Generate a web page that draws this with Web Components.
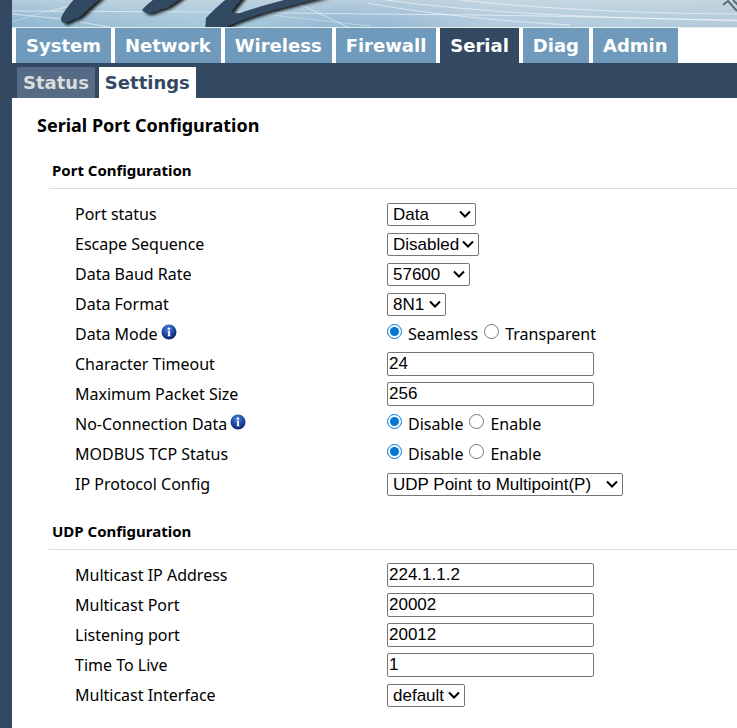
<!DOCTYPE html>
<html lang="en">
<head>
<meta charset="utf-8">
<title>Serial Port Configuration</title>
<style>
    :root {
        --navy: #334962;
        --blue: #6f9abb;
        --muted: #566b85;
        --rule: #dcdcdc;
    }

    body {
        margin: 0;
        min-height: 100vh;
        box-sizing: border-box;
        border-left: 12px solid var(--navy);
        background: #fff;
        color: #000;
        font: 16px/20px "Noto Sans", "Open Sans", sans-serif;
        overflow-x: hidden;
    }

    main {
        padding: 15px 0 0 25px;
    }

    h1 {
        margin: 0 0 23px;
        font-size: 18px;
        line-height: 24px;
    }
</style>
</head>
<body>
<page-banner></page-banner>
<main-tabs>
    <nav-tab>System</nav-tab>
    <nav-tab>Network</nav-tab>
    <nav-tab>Wireless</nav-tab>
    <nav-tab>Firewall</nav-tab>
    <nav-tab class="active">Serial</nav-tab>
    <nav-tab>Diag</nav-tab>
    <nav-tab>Admin</nav-tab>
</main-tabs>
<sub-tabs>
    <nav-tab class="sub">Status</nav-tab>
    <nav-tab class="sub active">Settings</nav-tab>
</sub-tabs>
<main>
    <h1>Serial Port Configuration</h1>
    <config-section heading="Port Configuration">
        <select-field label="Port status" options="Data" width="89"></select-field>
        <select-field label="Escape Sequence" options="Disabled|Enabled" width="92"></select-field>
        <select-field label="Data Baud Rate" options="57600|38400|19200|9600" width="83"></select-field>
        <select-field label="Data Format" options="8N1|8E1|8O1" width="59"></select-field>
        <radio-field label="Data Mode" options="Seamless|Transparent" info></radio-field>
        <text-field label="Character Timeout" value="24"></text-field>
        <text-field label="Maximum Packet Size" value="256"></text-field>
        <radio-field label="No-Connection Data" options="Disable|Enable" info></radio-field>
        <radio-field label="MODBUS TCP Status" options="Disable|Enable"></radio-field>
        <select-field label="IP Protocol Config" options="UDP Point to Multipoint(P)" width="236"></select-field>
    </config-section>
    <config-section heading="UDP Configuration">
        <text-field label="Multicast IP Address" value="224.1.1.2"></text-field>
        <text-field label="Multicast Port" value="20002"></text-field>
        <text-field label="Listening port" value="20012"></text-field>
        <text-field label="Time To Live" value="1"></text-field>
        <select-field label="Multicast Interface" options="default" width="78"></select-field>
    </config-section>
</main>

<script>
class PageBanner extends HTMLElement {
    constructor() {
        super();
        this.attachShadow({ mode: 'open' });
        this.shadowRoot.innerHTML = `
            <style>
                :host {
                    display: block;
                    height: 27px;
                    border-bottom: 1px solid #e4ecea;
                    background: #b4cbdb;
                    overflow: hidden;
                }
                svg {
                    display: block;
                    width: 100%;
                    height: 27px;
                }
            </style>
            <svg viewBox="12 0 725 27" preserveAspectRatio="xMinYMin slice" aria-hidden="true">
                <defs>
                    <linearGradient id="sky">
                        <stop offset="0" stop-color="#8db6d0"/>
                        <stop offset=".12" stop-color="#9cc0d6"/>
                        <stop offset=".28" stop-color="#a9c9dc"/>
                        <stop offset=".45" stop-color="#94b9d3"/>
                        <stop offset=".53" stop-color="#9abbd5"/>
                        <stop offset=".65" stop-color="#b4cadd"/>
                        <stop offset=".85" stop-color="#b5cedd"/>
                        <stop offset="1" stop-color="#b3cad8"/>
                    </linearGradient>
                    <linearGradient id="haze" x2="0" y2="1">
                        <stop offset="0" stop-color="#d5dfe3" stop-opacity=".55"/>
                        <stop offset="1" stop-color="#b7cfdf" stop-opacity="0"/>
                    </linearGradient>
                    <filter id="shade" x="-10%" y="-20%" width="130%" height="160%">
                        <feDropShadow dx="3" dy="2" stdDeviation="1.5" flood-color="#000" flood-opacity=".85"/>
                    </filter>
                </defs>
                <rect x="12" width="725" height="27" fill="url(#sky)"/>
                <rect x="12" width="725" height="27" fill="url(#haze)"/>
                <g fill="none" stroke="#fff" stroke-opacity=".55">
                    <path d="M12 11 L220 12 L370 14 Q560 15 737 21"/>
                    <path d="M12 14 L62 19 M80 22 L110 27 M50 11 L94 0"/>
                    <path d="M12 22 L48 11" stroke-opacity=".3"/>
                    <path d="M297 3 L350 28"/>
                    <path d="M262 14 L370 26" stroke-opacity=".35"/>
                    <path d="M367 3 Q450 18 570 25"/>
                    <path d="M385 0 Q520 18 737 20"/>
                    <path d="M460 0 Q580 13 737 14"/>
                </g>
                <g fill="#334962" filter="url(#shade)">
                    <path d="M77 -4 H103 Q92 5 82 15 Q79 18 74 19 L66 23 Q61 24 61 18 Q64 10 77 -4Z"/>
                    <path d="M158 -4 H184 Q176 2 168 7 L151 13 Q145 14 142 10 Q146 5 158 -4Z"/>
                    <path fill-rule="evenodd" d="M230 -4 H328 C290 6 255 13 228 26 L222 30 H205 L206 18 Q214 9 230 -4Z M244 -4 Q236 5 231 12 Q234 14 240 13 Q260 6 300 -4Z"/>
                </g>
                <g fill="none" stroke="#5e6b76" stroke-width="2">
                    <path d="M723 5 L728 1 L737 11 M733 0 L738 5"/>
                </g>
            </svg>
        `;
    }
}

class MainTabs extends HTMLElement {
    constructor() {
        super();
        this.attachShadow({ mode: 'open' });
        this.shadowRoot.innerHTML = `
            <style>
                :host {
                    display: block;
                }
                nav {
                    display: flex;
                    gap: 4px;
                    padding-left: 4px;
                }
            </style>
            <nav aria-label="Main"><slot></slot></nav>
        `;
    }
}

class SubTabs extends HTMLElement {
    constructor() {
        super();
        this.attachShadow({ mode: 'open' });
        this.shadowRoot.innerHTML = `
            <style>
                :host {
                    display: block;
                    background: var(--navy);
                }
                nav {
                    display: flex;
                    gap: 4px;
                    padding: 4px 0 0 5px;
                }
            </style>
            <nav aria-label="Serial"><slot></slot></nav>
        `;
    }
}

class NavTab extends HTMLElement {
    constructor() {
        super();
        this.attachShadow({ mode: 'open' });
        this.shadowRoot.innerHTML = `
            <style>
                :host {
                    display: block;
                    background: var(--blue);
                    color: #fff;
                    font: bold 18px/35px "DejaVu Sans", sans-serif;
                }
                :host(.active) {
                    background: var(--navy);
                }
                :host(.sub) {
                    background: var(--muted);
                    color: #dcdcdc;
                    line-height: 31px;
                }
                :host(.sub.active) {
                    background: #fff;
                    color: var(--navy);
                }
                a {
                    display: block;
                    padding: 0 10px;
                    color: inherit;
                    text-decoration: none;
                }
                :host(.sub) a {
                    padding: 0 6px;
                }
            </style>
            <a href="#"><slot></slot></a>
        `;
    }
}

class ConfigSection extends HTMLElement {
    constructor() {
        super();
        this.attachShadow({ mode: 'open' });
        this.shadowRoot.innerHTML = `
            <style>
                :host {
                    display: block;
                    margin: 0 0 22px 12px;
                }
                h2 {
                    margin: 0 0 10px;
                    padding: 0 3px 8px;
                    border-bottom: 1px solid var(--rule);
                    font-size: 15px;
                    line-height: 20px;
                }
                div {
                    padding-left: 26px;
                }
            </style>
            <h2></h2>
            <div><slot></slot></div>
        `;
    }

    connectedCallback() {
        this.shadowRoot.querySelector('h2').textContent = this.getAttribute('heading');
    }
}

class InfoIcon extends HTMLElement {
    constructor() {
        super();
        this.attachShadow({ mode: 'open' });
        this.shadowRoot.innerHTML = `
            <style>
                :host {
                    display: inline-block;
                    vertical-align: top;
                    cursor: help;
                }
                svg {
                    display: block;
                }
            </style>
            <svg width="16" height="16" viewBox="0 0 16 16" role="img" aria-label="Help">
                <defs>
                    <radialGradient id="ball" cx=".45" cy=".3" r=".7">
                        <stop offset="0" stop-color="#5b86dc"/>
                        <stop offset=".5" stop-color="#2450ad"/>
                        <stop offset="1" stop-color="#0b1f66"/>
                    </radialGradient>
                </defs>
                <circle cx="8" cy="8" r="7.5" fill="url(#ball)"/>
                <circle cx="8" cy="4.6" r="1.2" fill="#fff"/>
                <path d="M6.6 6.8 H9 V11.4 H9.6 V12.2 H6.6 V11.4 H7.2 V7.6 H6.6Z" fill="#fff"/>
            </svg>
        `;
    }
}

// Shared row: label on the left, control on the right
class FormField extends HTMLElement {
    constructor() {
        super();
        this.attachShadow({ mode: 'open' });
    }

    connectedCallback() {
        const icon = this.hasAttribute('info') ? '<info-icon></info-icon>' : '';
        this.shadowRoot.innerHTML = `
            <style>
                :host {
                    display: grid;
                    grid-template-columns: 312px 1fr;
                    align-items: center;
                    height: 30px;
                }
                .name, .control {
                    display: flex;
                    align-items: center;
                    gap: 3px;
                }
                info-icon {
                    margin-bottom: 5px;
                }
                input, select {
                    box-sizing: border-box;
                    margin: 0;
                    border: 1px solid #767676;
                    border-radius: 2px;
                    background-color: #fff;
                    color: #000;
                    font: 17px "Liberation Sans", Arial, sans-serif;
                }
                input[type=text] {
                    width: 207px;
                    height: 24px;
                    padding: 1px;
                }
                .select {
                    display: grid;
                    align-items: center;
                }
                .select > * {
                    grid-area: 1 / 1;
                }
                select {
                    appearance: none;
                    height: 23px;
                    padding: 0 0 0 5px;
                }
                .select svg {
                    justify-self: end;
                    margin-right: 5px;
                    pointer-events: none;
                }
                input[type=radio] {
                    width: 15px;
                    height: 15px;
                    margin: 0 3px 5px 0;
                    accent-color: #0078d7;
                }
                .control label {
                    margin-right: 3px;
                }
            </style>
            <div class="name">${this.renderLabel()}${icon}</div>
            <div class="control">${this.renderControl()}</div>
        `;
    }

    get options() {
        return this.getAttribute('options').split('|');
    }

    renderLabel() {
        return `<label for="field">${this.getAttribute('label')}</label>`;
    }
}

class TextField extends FormField {
    renderControl() {
        return `<input type="text" id="field" value="${this.getAttribute('value')}">`;
    }
}

class SelectField extends FormField {
    renderControl() {
        const options = this.options.map(option => `<option>${option}</option>`).join('');
        return `
            <div class="select">
                <select id="field" style="width: ${this.getAttribute('width')}px">${options}</select>
                <svg width="12" height="8" viewBox="0 0 12 8" aria-hidden="true">
                    <path d="M1 1.5 L6 6.5 L11 1.5" fill="none" stroke="#000" stroke-width="2"/>
                </svg>
            </div>
        `;
    }
}

class RadioField extends FormField {
    renderLabel() {
        return `<span>${this.getAttribute('label')}</span>`;
    }

    renderControl() {
        return this.options.map((option, i) => `
            <input type="radio" name="choice" id="choice${i}" ${i === 0 ? 'checked' : ''}>
            <label for="choice${i}">${option}</label>
        `).join('');
    }
}

customElements.define('page-banner', PageBanner);
customElements.define('main-tabs', MainTabs);
customElements.define('sub-tabs', SubTabs);
customElements.define('nav-tab', NavTab);
customElements.define('config-section', ConfigSection);
customElements.define('info-icon', InfoIcon);
customElements.define('text-field', TextField);
customElements.define('select-field', SelectField);
customElements.define('radio-field', RadioField);
</script>
</body>
</html>
